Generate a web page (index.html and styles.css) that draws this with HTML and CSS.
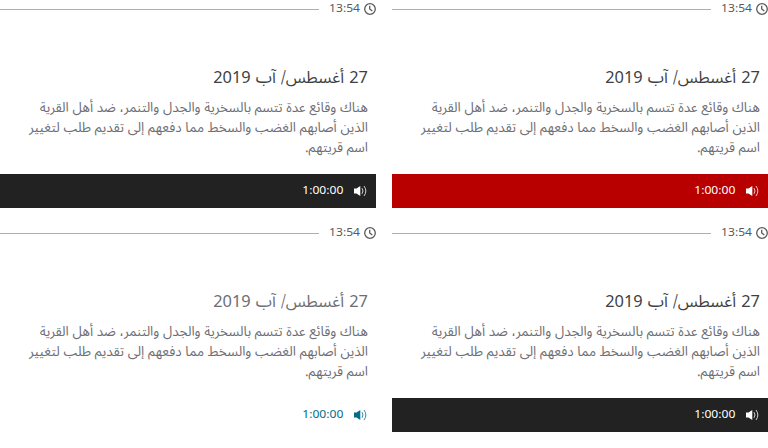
FILE: index.html
```
<!DOCTYPE html>
<html lang="ar" dir="rtl">
<head>
<meta charset="utf-8">
<title>جدول البرامج</title>
<link rel="stylesheet" href="styles.css">
</head>
<body>
<svg width="0" height="0" class="defs">
<symbol id="clock" viewBox="0 0 12 12"><circle cx="6" cy="6" r="5.300"/><path d="M5.700 2.800V6l2.600 1.900"/></symbol>
<symbol id="audio" viewBox="0 0 13 12"><path d="M0 3.500h2.500L6.300 1v10L2.500 8.500H0z"/><path class="wave" d="M8 3.200q2 2.800 0 5.600M10 1q3.700 5 0 10"/></symbol>
</svg>
<main class="schedule">
<article class="programme next">
<header class="start"><svg class="clock"><use href="#clock"/></svg><time>13:54</time><span class="rule"></span></header>
<div class="card"><div class="text"><h3><span class="num">27</span> أغسطس/ آب <span class="num">2019</span></h3><p>هناك وقائع عدة تتسم بالسخرية والجدل والتنمر، ضد أهل القرية الذين أصابهم الغضب والسخط مما دفعهم إلى تقديم طلب لتغيير اسم قريتهم.</p></div>
<div class="bar live"><svg class="audio"><use href="#audio"/></svg><time>1:00:00</time></div></div>
</article>
<article class="programme">
<header class="start"><svg class="clock"><use href="#clock"/></svg><time>13:54</time><span class="rule"></span></header>
<div class="card"><div class="text"><h3><span class="num">27</span> أغسطس/ آب <span class="num">2019</span></h3><p>هناك وقائع عدة تتسم بالسخرية والجدل والتنمر، ضد أهل القرية الذين أصابهم الغضب والسخط مما دفعهم إلى تقديم طلب لتغيير اسم قريتهم.</p></div>
<div class="bar"><svg class="audio"><use href="#audio"/></svg><time>1:00:00</time></div></div>
</article>
<article class="programme">
<header class="start"><svg class="clock"><use href="#clock"/></svg><time>13:54</time><span class="rule"></span></header>
<div class="card"><div class="text"><h3><span class="num">27</span> أغسطس/ آب <span class="num">2019</span></h3><p>هناك وقائع عدة تتسم بالسخرية والجدل والتنمر، ضد أهل القرية الذين أصابهم الغضب والسخط مما دفعهم إلى تقديم طلب لتغيير اسم قريتهم.</p></div>
<div class="bar"><svg class="audio"><use href="#audio"/></svg><time>1:00:00</time></div></div>
</article>
<article class="programme upcoming">
<header class="start"><svg class="clock"><use href="#clock"/></svg><time>13:54</time><span class="rule"></span></header>
<div class="card"><div class="text"><h3><span class="num">27</span> أغسطس/ آب <span class="num">2019</span></h3><p>هناك وقائع عدة تتسم بالسخرية والجدل والتنمر، ضد أهل القرية الذين أصابهم الغضب والسخط مما دفعهم إلى تقديم طلب لتغيير اسم قريتهم.</p></div>
<div class="bar"><svg class="audio"><use href="#audio"/></svg><time>1:00:00</time></div></div>
</article>
</main>
</body>
</html>
```
FILE: styles.css
```
*{box-sizing:border-box}
body{margin:0;background:#fff;font-family:"Noto Sans Arabic UI","Noto Naskh Arabic","Noto Sans",sans-serif;color:#3f3f42}
.defs{display:none}
h3,p{margin:0;font-weight:400}
.schedule{display:grid;grid-template-columns:1fr 1fr;column-gap:16px}
.programme{height:224px}
.start{display:flex;align-items:center;height:18px;color:#5a5a5a}
time{font:11px/16px "Noto Sans",sans-serif;white-space:nowrap;transform:scaleX(1.1);transform-origin:right}
.start time{width:31px;height:16px;margin:0 4px 2px 10px}
.clock{width:12px;height:12px;fill:none;stroke:#5a5a5a;stroke-width:1.3}
.rule{flex:1;height:1px;background:#aeaeb5}
.card{padding-top:47px}
.text{height:109px;padding:0 8px}
h3{font-size:16.4px;line-height:24px;word-spacing:.8px;color:#3f3f42;white-space:nowrap}
.num{font-family:"Noto Sans",sans-serif;letter-spacing:1px}
p{max-width:346px;font-size:13.4px;word-spacing:.2px;line-height:20px;padding-top:8px;color:#6e6e73}
.bar{display:flex;align-items:center;height:34px;padding:0 9px;background:#222;color:#fff}
.live{background:#b80000}
.bar time{margin:0 11px 2px 0}
.audio{width:13px;height:12px;fill:currentColor}
.wave{fill:none;stroke:currentColor;stroke-opacity:.8}
.upcoming h3{color:#6e6e73}
.upcoming .bar{background:#fff;color:#006e8a}
```
